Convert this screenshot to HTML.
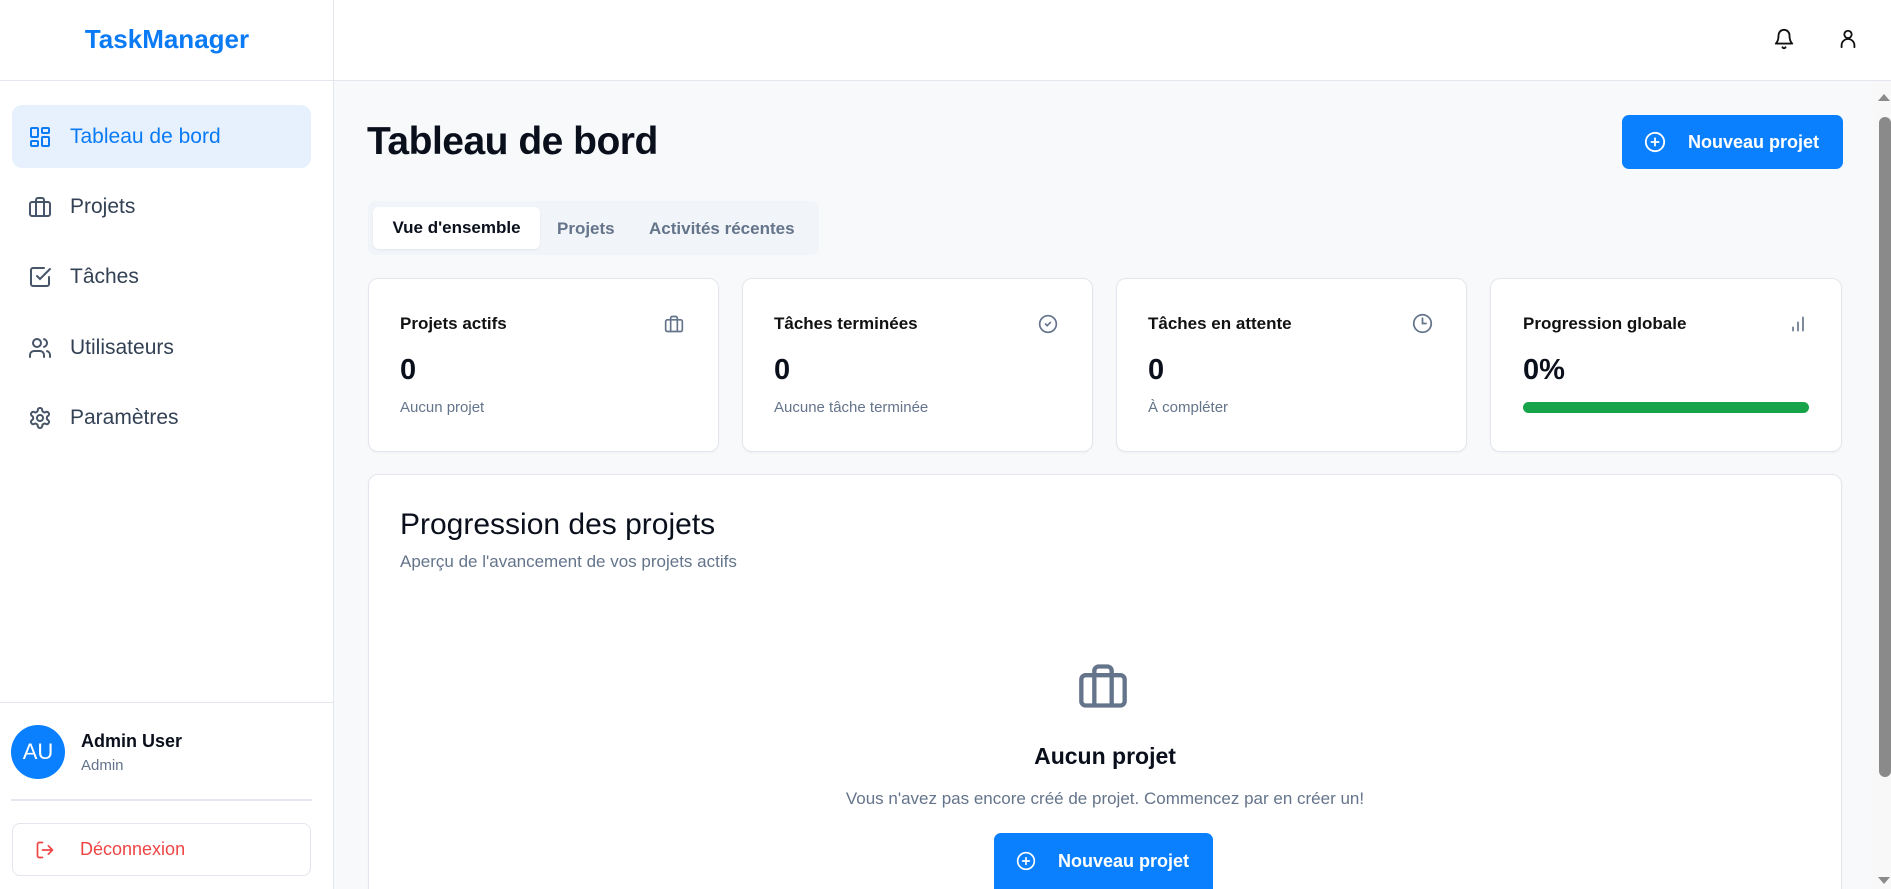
<!DOCTYPE html>
<html><head><meta charset="utf-8"><style>
*{box-sizing:border-box;margin:0;padding:0}
html{overflow:hidden;height:889px}
body{width:1891px;height:889px;overflow:hidden;font-family:"Liberation Sans",sans-serif;background:#f8f9fb;position:relative;color:#0a0f1c}
.a{position:absolute}
.side{left:0;top:0;width:334px;height:889px;background:#fff;border-right:1px solid #e3e6ec}
.hdr{left:334px;top:0;width:1557px;height:81px;background:#fff;border-bottom:1px solid #e3e6ec}
.logo{left:0;top:0;width:334px;height:81px;border-bottom:1px solid #e3e6ec;display:flex;align-items:center;justify-content:center;color:#0a7bf5;font-weight:bold;font-size:26px;padding-bottom:2px}
.nav{left:12px;width:299px;height:63px;border-radius:10px;display:flex;align-items:center;font-size:21px;color:#334155}
.nav svg{margin-left:16px;margin-right:18px}
.nav.act{background:#e7f1fd;color:#0a7bf5}
.card{background:#fff;border:1px solid #e3e6ec;border-radius:10px;box-shadow:0 1px 2px rgba(0,0,0,.04)}
.lbl{font-size:17px;font-weight:600;color:#111}
.num{font-size:29px;font-weight:bold}
.sub{font-size:15px;color:#64748b}
.btn{background:#0a80ff;color:#fff;border-radius:7px;display:flex;align-items:center;font-weight:bold;font-size:18px}
</style></head><body>
<div class="a side"></div>
<div class="a logo">TaskManager</div>
<div class="a hdr"></div>
<svg class="a" style="left:1773px;top:28px" width="22" height="22" viewBox="0 0 24 24" fill="none" stroke="#111" stroke-width="2" stroke-linecap="round" stroke-linejoin="round"><path d="M6 8a6 6 0 0 1 12 0c0 7 3 9 3 9H3s3-2 3-9"/><path d="M10.3 21a1.94 1.94 0 0 0 3.4 0"/></svg>
<svg class="a" style="left:1837px;top:28px" width="22" height="22" viewBox="0 0 24 24" fill="none" stroke="#111" stroke-width="2" stroke-linecap="round"><circle cx="12" cy="7" r="4"/><path d="M5 21v-2a7 7 0 0 1 14 0v2"/></svg>

<div class="a nav act" style="top:105px"><svg width="24" height="24" viewBox="0 0 24 24" fill="none" stroke="#0a7bf5" stroke-width="2"><rect x="3" y="3" width="7" height="9" rx="1"/><rect x="14" y="3" width="7" height="5" rx="1"/><rect x="14" y="12" width="7" height="9" rx="1"/><rect x="3" y="16" width="7" height="5" rx="1"/></svg>Tableau de bord</div>
<div class="a nav" style="top:175px"><svg width="24" height="24" viewBox="0 0 24 24" fill="none" stroke="#475569" stroke-width="2"><rect x="2" y="7" width="20" height="14" rx="2"/><path d="M16 21V5a2 2 0 0 0-2-2h-4a2 2 0 0 0-2 2v16"/></svg>Projets</div>
<div class="a nav" style="top:245px"><svg width="24" height="24" viewBox="0 0 24 24" fill="none" stroke="#475569" stroke-width="2" stroke-linecap="round"><path d="M9 11l3 3L22 4"/><path d="M21 12v7a2 2 0 0 1-2 2H5a2 2 0 0 1-2-2V5a2 2 0 0 1 2-2h11"/></svg>Tâches</div>
<div class="a nav" style="top:316px"><svg width="24" height="24" viewBox="0 0 24 24" fill="none" stroke="#475569" stroke-width="2" stroke-linecap="round"><path d="M16 21v-2a4 4 0 0 0-4-4H6a4 4 0 0 0-4 4v2"/><circle cx="9" cy="7" r="4"/><path d="M22 21v-2a4 4 0 0 0-3-3.87M16 3.13a4 4 0 0 1 0 7.75"/></svg>Utilisateurs</div>
<div class="a nav" style="top:386px"><svg width="24" height="24" viewBox="0 0 24 24" fill="none" stroke="#475569" stroke-width="2"><path d="M12.22 2h-.44a2 2 0 0 0-2 2v.18a2 2 0 0 1-1 1.73l-.43.25a2 2 0 0 1-2 0l-.15-.08a2 2 0 0 0-2.73.73l-.22.38a2 2 0 0 0 .73 2.730l.15.1a2 2 0 0 1 1 1.72v.51a2 2 0 0 1-1 1.74l-.15.09a2 2 0 0 0-.73 2.73l.22.38a2 2 0 0 0 2.73.73l.15-.08a2 2 0 0 1 2 0l.43.25a2 2 0 0 1 1 1.73V20a2 2 0 0 0 2 2h.44a2 2 0 0 0 2-2v-.18a2 2 0 0 1 1-1.73l.43-.25a2 2 0 0 1 2 0l.15.08a2 2 0 0 0 2.73-.73l.22-.39a2 2 0 0 0-.73-2.73l-.15-.08a2 2 0 0 1-1-1.74v-.5a2 2 0 0 1 1-1.74l.15-.09a2 2 0 0 0 .73-2.73l-.22-.38a2 2 0 0 0-2.73-.73l-.15.08a2 2 0 0 1-2 0l-.43-.25a2 2 0 0 1-1-1.73V4a2 2 0 0 0-2-2z"/><circle cx="12" cy="12" r="3"/></svg>Paramètres</div>

<div class="a" style="left:0;top:702px;width:334px;border-top:1px solid #e3e6ec"></div>
<div class="a" style="left:11px;top:725px;width:54px;height:54px;border-radius:50%;background:#0a80ff;color:#fff;font-size:22px;display:flex;align-items:center;justify-content:center">AU</div>
<div class="a" style="left:81px;top:731px;font-size:18px;font-weight:600">Admin User</div>
<div class="a" style="left:81px;top:757px;font-size:15px;color:#64748b">Admin</div>
<div class="a" style="left:11px;top:799px;width:301px;height:2px;background:#e3e6ef"></div>
<div class="a" style="left:12px;top:823px;width:299px;height:53px;border:1px solid #e3e6ec;border-radius:8px;display:flex;align-items:center;color:#ef4444;font-size:18px;font-weight:500"><svg style="margin-left:22px;margin-right:25px" width="20" height="20" viewBox="0 0 24 24" fill="none" stroke="#ef4444" stroke-width="2" stroke-linecap="round" stroke-linejoin="round"><path d="M9 21H5a2 2 0 0 1-2-2V5a2 2 0 0 1 2-2h4"/><path d="M16 17l5-5-5-5M21 12H9"/></svg>Déconnexion</div>

<div class="a" style="left:367px;top:120px;font-size:39px;font-weight:bold;letter-spacing:-0.5px">Tableau de bord</div>
<div class="a btn" style="left:1622px;top:115px;width:221px;height:54px"><svg style="margin-left:22px;margin-right:22px" width="22" height="22" viewBox="0 0 24 24" fill="none" stroke="#fff" stroke-width="2" stroke-linecap="round"><circle cx="12" cy="12" r="10"/><path d="M8 12h8M12 8v8"/></svg>Nouveau projet</div>

<div class="a" style="left:368px;top:201px;width:451px;height:54px;background:#f1f4f8;border-radius:8px"></div>
<div class="a" style="left:373px;top:207px;width:167px;height:42px;background:#fff;border-radius:6px;box-shadow:0 1px 2px rgba(0,0,0,.06);display:flex;align-items:center;justify-content:center;font-size:17px;font-weight:600">Vue d'ensemble</div>
<div class="a" style="left:557px;top:219px;font-size:17px;font-weight:600;color:#64748b">Projets</div>
<div class="a" style="left:649px;top:219px;font-size:17px;font-weight:600;color:#64748b">Activités récentes</div>

<div class="a card" style="left:368px;top:278px;width:351px;height:174px"></div>
<div class="a card" style="left:742px;top:278px;width:351px;height:174px"></div>
<div class="a card" style="left:1116px;top:278px;width:351px;height:174px"></div>
<div class="a card" style="left:1490px;top:278px;width:352px;height:174px"></div>

<div class="a lbl" style="left:400px;top:314px">Projets actifs</div>
<svg class="a" style="left:664px;top:314px" width="20" height="20" viewBox="0 0 24 24" fill="none" stroke="#64748b" stroke-width="2"><rect x="2" y="7" width="20" height="14" rx="2"/><path d="M16 21V5a2 2 0 0 0-2-2h-4a2 2 0 0 0-2 2v16"/></svg>
<div class="a num" style="left:400px;top:354px">0</div>
<div class="a sub" style="left:400px;top:399px">Aucun projet</div>

<div class="a lbl" style="left:774px;top:314px">Tâches terminées</div>
<svg class="a" style="left:1038px;top:314px" width="20" height="20" viewBox="0 0 24 24" fill="none" stroke="#64748b" stroke-width="2" stroke-linecap="round"><circle cx="12" cy="12" r="10"/><path d="M9 12l2 2 4-4"/></svg>
<div class="a num" style="left:774px;top:354px">0</div>
<div class="a sub" style="left:774px;top:399px">Aucune tâche terminée</div>

<div class="a lbl" style="left:1148px;top:314px">Tâches en attente</div>
<svg class="a" style="left:1412px;top:313px" width="21" height="21" viewBox="0 0 24 24" fill="none" stroke="#64748b" stroke-width="2" stroke-linecap="round"><circle cx="12" cy="12" r="10"/><path d="M12 6v6h4"/></svg>
<div class="a num" style="left:1148px;top:354px">0</div>
<div class="a sub" style="left:1148px;top:399px">À compléter</div>

<div class="a lbl" style="left:1523px;top:314px">Progression globale</div>
<svg class="a" style="left:1788px;top:314px" width="20" height="20" viewBox="0 0 24 24" fill="none" stroke="#64748b" stroke-width="2" stroke-linecap="round"><path d="M18 20V4M12 20V10M6 20v-4"/></svg>
<div class="a num" style="left:1523px;top:354px">0%</div>
<div class="a" style="left:1523px;top:402px;width:286px;height:11px;border-radius:6px;background:#16a34a"></div>

<div class="a card" style="left:368px;top:474px;width:1474px;height:425px"></div>
<div class="a" style="left:400px;top:508px;font-size:30px;font-weight:500">Progression des projets</div>
<div class="a" style="left:400px;top:552px;font-size:17px;color:#64748b">Aperçu de l'avancement de vos projets actifs</div>
<svg class="a" style="left:1077px;top:660px" width="52" height="52" viewBox="0 0 24 24" fill="none" stroke="#64748b" stroke-width="2"><rect x="2" y="7" width="20" height="14" rx="2"/><path d="M16 21V5a2 2 0 0 0-2-2h-4a2 2 0 0 0-2 2v16"/></svg>
<div class="a" style="left:368px;top:743px;width:1474px;text-align:center;font-size:23px;font-weight:600">Aucun projet</div>
<div class="a" style="left:368px;top:789px;width:1474px;text-align:center;font-size:17px;color:#64748b">Vous n'avez pas encore créé de projet. Commencez par en créer un!</div>
<div class="a btn" style="left:994px;top:833px;width:219px;height:56px;border-radius:7px 7px 0 0"><svg style="margin-left:22px;margin-right:22px" width="20" height="20" viewBox="0 0 24 24" fill="none" stroke="#fff" stroke-width="2" stroke-linecap="round"><circle cx="12" cy="12" r="10"/><path d="M8 12h8M12 8v8"/></svg>Nouveau projet</div>

<div class="a" style="left:1873px;top:81px;width:18px;height:808px;background:#f8f8f8"></div>
<div class="a" style="left:1878px;top:94px;width:0;height:0;border-left:6px solid transparent;border-right:6px solid transparent;border-bottom:7px solid #8a8a8a"></div>
<div class="a" style="left:1879px;top:117px;width:12px;height:660px;border-radius:6px;background:#8a8a8a"></div>
<div class="a" style="left:1878px;top:877px;width:0;height:0;border-left:6px solid transparent;border-right:6px solid transparent;border-top:7px solid #8a8a8a"></div>
</body></html>
